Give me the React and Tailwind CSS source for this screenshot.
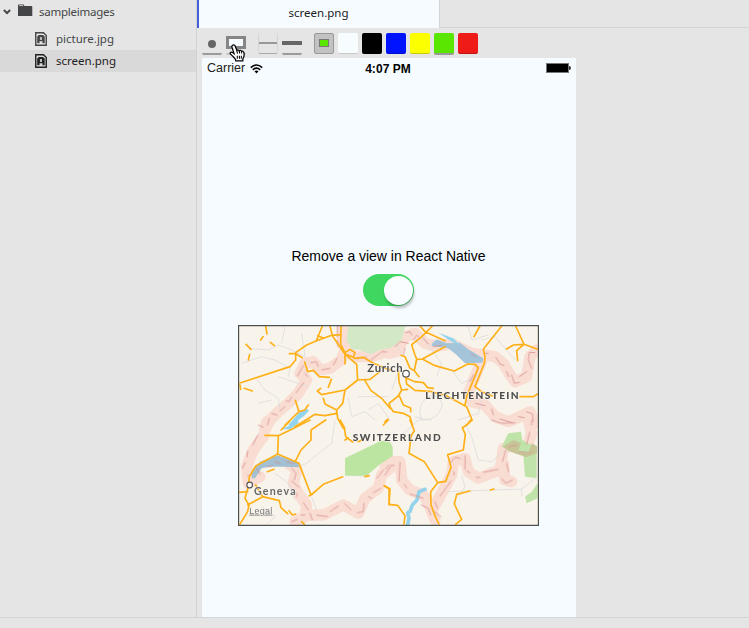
function FileIcon() {
  return (
    <svg width="12" height="14" viewBox="0 0 12 14" fill="none" className="block shrink-0">
      <path d="M.75.75H8.5L11.25 3.5V13.25H.75Z" stroke="currentColor" strokeWidth="1.4" />
      <path d="M2.2 11.3V4.6L3.8 3H8L9.7 4.6V11.3H7.5V9.3H4.5V11.3Z" fill="currentColor" />
      <path d="M4.9 5H7V8H4.9Z" fill="#bbb" />
    </svg>
  );
}

function Sidebar() {
  return (
    <aside className="w-[197px] h-[617px] shrink-0 border-r border-[#d1d2d3] text-[#444547] text-[11.5px] leading-[22px]">
      <div className="flex h-[24px] items-center pl-[3px]">
        <svg width="8" height="6" viewBox="0 0 8 6" className="block"><path d="M.9 1 4 4.1 7.1 1" fill="none" stroke="#444547" strokeWidth="2" /></svg>
        <svg width="15" height="13" viewBox="0 0 15 13" className="ml-[7px] mb-[3px] block"><path d="M0 1.2Q0 .5.7.5H5.4Q6.2.5 6.2 1.3V2H13.5Q14.3 2 14.3 2.8V12H0Z" fill="#444547" /><path d="M1 1.6H5.2" stroke="#e5e5e5" strokeWidth=".8" /></svg>
        <span className="ml-[6px] tracking-[-0.25px]">sampleimages</span>
      </div>
      <div className="mt-[4px] flex h-[22px] items-center gap-[9px] pl-[35px]"><FileIcon /><span>picture.jpg</span></div>
      <div className="flex h-[22px] items-center gap-[9px] bg-[#d9d9d9] pl-[35px] text-[#1f2022]"><FileIcon /><span>screen.png</span></div>
    </aside>
  );
}

function Swatch({ color, active }) {
  return (
    <div className={"w-[20px] rounded-[2px] " + color + (active ? " h-[22px] border-b-2 border-[#999]" : " h-[21px] border-b border-black/20")} />
  );
}

function Toolbar() {
  return (
    <div className="relative flex h-[30px] items-start gap-[4px] pl-[5px] pt-[5px]">
      <div className="flex h-[22px] w-[20px] items-center justify-center rounded-[2px] border-b-2 border-[#9b9b9b]"><i className="mt-[1px] block size-[8px] rounded-full bg-[#666]" /></div>
      <div className="flex h-[22px] w-[20px] items-start rounded-[2px] border-b-2 border-[#c4c4c4] pt-[3px]"><i className="block h-[13px] w-[20px] border-[3px] border-[#858585] bg-[#f5fbff]" /></div>
      <div className="ml-[8px] h-[21px] w-[20px] rounded-[2px] border-x border-b border-x-[#d5d5d5] border-b-[#aaa] pt-[9px]"><i className="block h-[2px] bg-[#999]" /></div>
      <div className="h-[22px] w-[20px] rounded-[2px] border-b-2 border-[#9b9b9b] pt-[8px]"><i className="block h-[4px] bg-[#666]" /></div>
      <div className="ml-[8px] flex h-[21px] w-[20px] items-center justify-center rounded-[2px] border border-[#999] bg-[#c2c2c2]"><i className="mb-[2px] block h-[8px] w-[10px] border border-[#777] bg-[#5ae600]" /></div>
      <Swatch color="bg-[#f7fcff]" />
      <Swatch color="bg-black" />
      <Swatch color="bg-[#0013ff]" />
      <Swatch color="bg-[#fcff00]" />
      <Swatch color="bg-[#5ae600]" active />
      <Swatch color="bg-[#ee1b18]" />
      <svg className="absolute left-[32px] top-[16px]" width="17" height="18" viewBox="0 0 16 17">
        <path d="M3.3 1.2C4.4.3 5.5 1.1 5.9 2.1L7.4 6C8.3 5.3 9.2 5.7 9.5 6.3 10.5 5.7 11.3 6.1 11.7 6.8 12.6 6.4 13.6 6.8 14 8 14.5 10 14.4 12 13.2 13.5L13 16H6.4L5.8 14C4.2 12.3 2.9 10.6 1.5 9.6.6 8.7 1.3 7.4 2.4 7.6 3.2 7.7 3.9 8.4 4.7 9.1L2.8 3Q2.5 1.8 3.3 1.2Z" fill="white" stroke="black" strokeWidth="1.2" />
        <path d="M7.3 6 8 9M9.6 6.5 10 9M11.8 7 12 9M7.8 11V14M9.8 11V14M11.6 11V14" stroke="black" />
      </svg>
    </div>
  );
}

const bands = [
  { t: "translate(0 0)", d: "M325 15 L322 60 330 90 318 120 285 145 255 150 235 125 210 130 195 160 215 180 190 220 160 250 130 275 105 300 90 330 M330 95 L365 110 410 110 465 92" },
  { t: "translate(450 0)", d: "M12 100 L35 95 60 50 90 40 120 70 150 78 200 72 260 100 300 105 330 110 355 130 375 165 390 185 425 170 435 110 455 90 M295 110 L270 170 250 220 260 245 300 255 330 290 370 305 405 290 435 275 450 310" },
  { t: "translate(0 300)", d: "M95 5 L85 50 55 90 35 140 40 190 75 170 M160 130 L185 150 175 190 190 220 215 255 210 290 180 305 M215 285 L265 285 325 255 370 280 390 235 430 205 440 165 465 145" },
  { t: "translate(450 300)", d: "M0 140 L20 125 45 125 50 180 75 210 115 225 130 250 150 300 M145 265 L200 165 205 125 240 115 250 155 280 175 345 150 355 85 390 75 425 85 440 40 430 0 M355 130 L360 180 380 185" },
];

const roads = [
  { t: "translate(0 0)", d: "M15 189 L165 140 182 120 182 98 215 75 245 62 290 46 318 44 M245 60 L262 18 M248 47 L265 54 M285 18 L292 47 328 100 350 120 365 133 368 180 330 210 260 224 247 213 257 205 M318 18 L317 72 332 103 355 112 360 98 345 88 330 98 330 132 M357 115 L385 112 415 130 465 150 M368 180 L405 178 435 155 M390 182 L408 212 440 235 465 265 M163 101 L182 101 202 113 M209 126 L218 155 235 151 253 170 283 172 M289 178 L280 202 M92 18 L96 42 M84 50 L77 60 M106 67 L118 77 M33 73 L48 88 M44 103 L40 120 M15 195 L17 208 M28 205 L52 213 M330 210 L323 250 305 270 270 252 265 235 M305 270 L305 280 270 287 240 283 180 320 M305 270 L308 295 325 325 M220 255 L209 270 192 275 150 315 M192 275 L181 241" },
  { t: "translate(450 0)", d: "M142 18 L108 52 80 74 90 105 95 117 88 152 75 145 60 110 48 106 M105 18 L120 35 180 62 M180 80 L112 117 96 118 M112 117 L150 137 208 153 248 132 270 133 280 143 245 230 240 255 M350 18 L295 88 300 110 298 130 270 200 290 215 322 228 M405 230 L445 230 458 222 M285 18 L267 50 M392 18 L417 73 458 88 M417 73 L395 92 398 122 M417 73 L385 75 365 87 M88 152 L102 170 M62 170 L65 192 90 211 145 215 M65 175 L90 185 115 188 128 203 145 205 M40 150 L42 185 50 210 68 208 M50 210 L40 228 12 250 15 260 25 275 55 280 75 290 82 315 M44 230 L55 255 77 264 77 275 M145 217 L180 225 208 240 245 260 260 297 245 315 M0 305 L8 298" },
  { t: "translate(0 300)", d: "M15 312 L38 275 42 255 30 235 40 200 43 170 62 138 128 102 192 130 228 225 265 193 323 170 M90 46 L130 47 170 28 225 0 M138 30 L165 3 M130 47 L128 102 M182 122 L198 90 228 60 228 30 272 0 M38 255 L83 230 133 242 138 263 158 281 M83 230 L62 195 M162 272 L172 285 182 282 M12 217 L38 215 M97 155 L117 148 M315 0 L328 22 332 50 353 66 M330 60 L340 54 M370 65 L380 60 M390 170 L402 167 M445 15 L460 0 M447 197 L462 206 463 255 M222 228 L232 223 M200 305 L208 313" },
  { t: "translate(450 300)", d: "M75 0 L88 32 78 48 72 100 118 125 158 188 182 184 198 142 188 104 235 90 241 43 232 23 245 15 262 0 M158 188 L137 215 138 255 152 292 162 312 M0 198 L15 207 12 253 38 256 60 287 57 312 M255 213 L215 223 208 252 230 298 212 313 M316 210 L327 207" },
];

const borders = [
  { t: "translate(0 0)", d: "M307 18V50M308 62V80M306 115L295 135M285 145L260 150M250 140L244 125 228 128M205 137L187 168M210 160L218 170M206 188L183 218M170 230L162 245 154 243M150 260L135 273M126 285L110 280M103 295L97 315M365 115L395 112M407 120L445 92M445 97L455 95" },
  { t: "translate(450 0)", d: "M30 80L45 65 70 70M62 38L75 35 80 45M85 60L95 45 101 52M60 85L55 105M115 55L130 72M145 80L170 75M258 100L272 110M300 100L310 100M333 112L345 132 357 137M365 155L371 170M380 165L388 190 403 187M403 170L425 155M440 145L430 120 433 97 450 98M265 165L255 185M272 250L300 257M320 267L325 285M345 297L382 308M400 290L418 293M425 275L442 282 445 305" },
  { t: "translate(0 300)", d: "M70 15L85 22M68 45L53 75M38 92L36 110M30 128L22 145M38 167L50 165M75 162L65 145M110 138L100 140M120 125L135 130M155 125L175 130M170 145L183 160 178 180M170 183L192 202M186 220L185 230M205 248L220 270M210 285L198 285M187 298L170 305M232 300L225 280M245 285L278 290M285 275L310 258M328 250L348 270M367 278L385 275 387 250M400 230L410 235M415 218L437 205M425 175L445 150M452 147L463 135" },
  { t: "translate(450 300)", d: "M0 165L20 135 28 137M45 127L42 183M58 193L65 203M75 222L115 235M108 255L130 265 137 285M150 245L157 265M142 270L168 290M165 228L198 183M207 165V155M195 130L210 112 225 115M240 107V147M245 153L255 158M273 172L285 172M295 157L340 148M352 125L362 90M372 80L395 75M402 95L437 98M425 72L434 37M440 15V0M320 0L350 10 390 8M365 130L370 155M350 175L362 190 382 180" },
];

const minor = "M40 85L100 90 130 75 170 90 210 110M20 130L80 110 120 120 165 145 160 170M60 170L90 210 130 235M130 235L135 270M70 250L110 240M340 235L350 290 390 275 420 300M400 270L430 250 465 300M560 300Q540 250 590 225Q640 240 610 280Q590 310 540 290M560 50L620 130 605 170M650 150L680 190 740 160M740 60L780 50 840 120M700 20L710 60 760 45M740 240L730 280 670 300M345 405V465M345 465L400 470M300 300L290 370 250 400 215 430 190 440M120 460L160 490 180 540M80 560L120 590 100 610M690 310L710 350 730 420 770 425 810 390M680 465L690 500 670 530M640 515L860 507V530M860 507L900 475M230 530L245 570M500 345L550 300 590 300M130 170L220 200M370 230L460 230M490 155L470 210M470 50L500 100M200 40L210 110M150 20L140 70";

function Layer({ items, color, width, opacity = 1 }) {
  return (
    <g fill="none" stroke={color} strokeWidth={width} strokeLinejoin="round" strokeLinecap="round" opacity={opacity}>
      {items.map((b) => <path key={b.d} transform={b.t} d={b.d} />)}
    </g>
  );
}

function MapView() {
  return (
    <svg width="301" height="201" viewBox="9 15 903 603" className="mt-[19px] ml-[36px] block shrink-0">
      <path fill="#f8f4ec" d="M9 15H912V618H9Z" />
      <Layer items={bands} color="#f9ddd3" width="34" />
      <path d={minor} fill="none" stroke="#dedbdc" strokeWidth="2.5" />
      <path fill="#d3e9c6" d="M340 18H512L500 60 465 85 440 88 405 103 375 90 350 88 335 60Z" />
      <path fill="#bce5a2" d="M330 415 438 362 465 365 473 382 473 408 435 433 395 467H330Z" />
      <path fill="#c0e3aa" d="M820 340 858 335 862 360 905 385V475L870 470 865 405 820 385 800 380ZM908 490 890 515 870 530 875 550 908 535Z" />
      <path fill="#c6c596" d="M803 380 835 360 858 368 850 395 880 400 890 370 906 378V400L875 412 845 402 820 392Z" />
      <path fill="#a4c4da" d="M590 72 605 58 635 70 675 68 700 88 745 115 742 128 690 130 665 105 640 85 590 78Z" />
      <path fill="#93d5ef" d="M160 315 192 278 215 266 222 272 207 288 165 318ZM138 328 168 315 190 300V310L165 328ZM610 38 655 55 675 75 650 65Z" />
      <path fill="#a3bfd2" d="M50 475 52 450 75 425 128 406 165 420 190 428 192 442 145 440 105 440 80 445 60 475Z" />
      <path fill="none" stroke="#95d3ed" strokeWidth="11" strokeLinejoin="round" strokeLinecap="round" d="M570 508 552 515 546 540 532 555 525 575 518 578 522 595 518 614" />
      <Layer items={borders} color="#d68f8f" width="3" opacity={0.8} />
      <Layer items={roads} color="#ffb017" width="5" />
      <g fill="#fff" stroke="#555" strokeWidth="3.5"><circle cx="513" cy="161" r="10" /><circle cx="44" cy="495" r="8.5" /></g>
      <g fill="#4d4d4d" fontFamily="Lato, 'Open Sans', sans-serif" fontWeight="700" stroke="#faf6ef" strokeWidth="3" paintOrder="stroke">
        <text x="397" y="155" fontSize="34" textLength="106">Zurich</text>
        <text x="57" y="524" fontSize="32" textLength="125" fill="#686868">Geneva</text>
        <text x="353" y="362" fontSize="30.5" fontWeight="900" textLength="264">SWITZERLAND</text>
        <text x="571" y="237" fontSize="30.5" fontWeight="900" textLength="280">LIECHTENSTEIN</text>
      </g>
      <text x="43" y="581" fontSize="27" textLength="69" fill="#777" fontFamily="'Liberation Sans', sans-serif" textDecoration="underline">Legal</text>
      <path d="M10.5 16.5H910.5V616.5H10.5Z" fill="none" stroke="#4c4f4b" strokeWidth="4" />
    </svg>
  );
}

function Phone() {
  return (
    <div className="ml-[5px] flex h-[559px] w-[374px] flex-col bg-[#f5fbff] font-['Liberation_Sans',Arial,sans-serif] text-black">
      <div className="grid h-[20px] grid-cols-3 items-center text-[12.5px]">
        <div className="flex items-center gap-[5px] pl-[5px] pt-[1px]">
          <span className="text-[#222]">Carrier</span>
          <svg width="13" height="10" viewBox="0 0 13 10" fill="none" stroke="black" strokeWidth="1.6"><path d="M.8 3.6Q6.5-1.6 12.2 3.6M2.8 5.8Q6.5 2.4 10.2 5.8" /><path d="M4.5 7.2Q6.5 5.6 8.5 7.2L6.5 9.4Z" fill="black" stroke="none" /></svg>
        </div>
        <b className="pr-[2px] pt-[1px] text-center text-[12px] tracking-[0.05px]">4:07 PM</b>
        <div className="flex items-center justify-end pr-[5px]"><i className="block h-[10px] w-[23px] border border-[#777] bg-black" /><i className="block h-[4px] w-[2px] rounded-r bg-[#333]" /></div>
      </div>
      <div className="mt-[168px] pr-[1px] text-center text-[14px] leading-[20px] tracking-[-0.02px]">Remove a view in React Native</div>
      <div className="ml-[161px] mt-[8px] flex h-[32px] w-[51px] items-center justify-end rounded-full bg-[#40d760] pr-[1px]"><i className="block size-[29px] rounded-full bg-[#fafdff] shadow-[1px_3px_3px_rgba(0,0,0,.25)]" /></div>
      <MapView />
    </div>
  );
}

export default function App() {
  return (
    <div className="h-[628px] w-[749px] overflow-hidden bg-[#e5e5e5] font-['Noto_Sans','Open_Sans',sans-serif]">
      <div className="flex h-[618px] border-b border-[#d1d5d8]">
        <Sidebar />
        <main className="flex-1">
          <div className="flex h-[28px]">
            <div className="w-[242px] border-l-2 border-[#4560da] bg-[#f5fbff] pr-[1px] text-center text-[11.5px] leading-[25px] text-[#222]">screen.png</div>
            <div className="flex-1 border-b border-l border-[#d4d4d4]" />
          </div>
          <Toolbar />
          <Phone />
        </main>
      </div>
    </div>
  );
}
